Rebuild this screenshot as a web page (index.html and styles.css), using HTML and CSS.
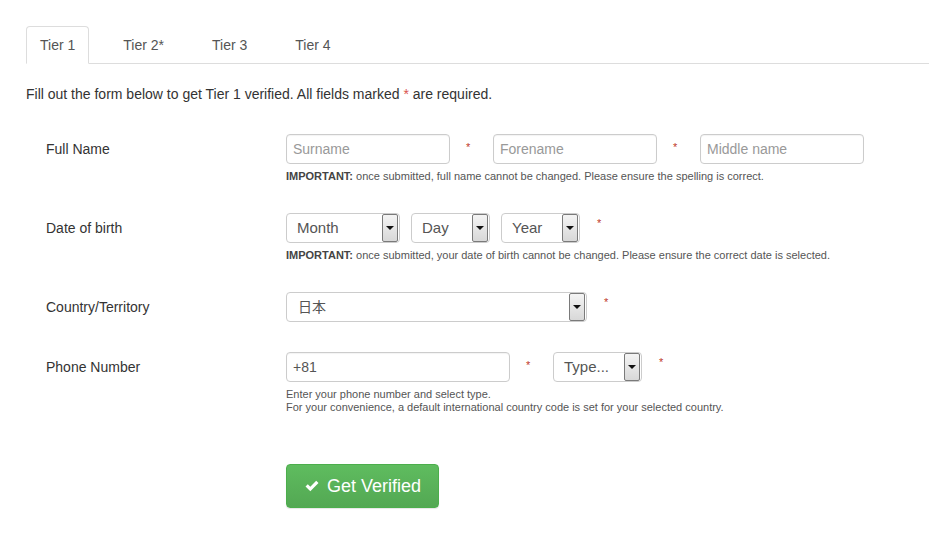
FILE: index.html
```html
<!DOCTYPE html>
<html>
<head>
<meta charset="utf-8">
<link rel="stylesheet" href="styles.css">
</head>
<body>
<div class="page">
  <ul class="tabs">
    <li class="tab active">Tier 1</li>
    <li class="tab">Tier 2*</li>
    <li class="tab">Tier 3</li>
    <li class="tab">Tier 4</li>
  </ul>
  <p class="intro">Fill out the form below to get Tier 1 verified. All fields marked <span class="req">*</span> are required.</p>

  <div class="form">
    <div class="row">
      <div class="label">Full Name</div>
      <div class="fields">
        <div class="controls">
          <div class="input w164 ph">Surname</div>
          <span class="star">*</span>
          <div class="input w164 ph">Forename</div>
          <span class="star">*</span>
          <div class="input w164 ph">Middle name</div>
        </div>
        <div class="help"><b>IMPORTANT:</b> once submitted, full name cannot be changed. Please ensure the spelling is correct.</div>
      </div>
    </div>

    <div class="row">
      <div class="label">Date of birth</div>
      <div class="fields">
        <div class="controls">
          <div class="select w114"><span class="val">Month</span><span class="btn"><span class="tri"></span></span></div>
          <div class="select w79 ml11"><span class="val">Day</span><span class="btn"><span class="tri"></span></span></div>
          <div class="select w79 ml11"><span class="val">Year</span><span class="btn"><span class="tri"></span></span></div>
          <span class="star s2">*</span>
        </div>
        <div class="help"><b>IMPORTANT:</b> once submitted, your date of birth cannot be changed. Please ensure the correct date is selected.</div>
      </div>
    </div>

    <div class="row">
      <div class="label">Country/Territory</div>
      <div class="fields">
        <div class="controls">
          <div class="select w301"><span class="val cjk">日本</span><span class="btn"><span class="tri"></span></span></div>
          <span class="star s2">*</span>
        </div>
      </div>
    </div>

    <div class="row">
      <div class="label">Phone Number</div>
      <div class="fields">
        <div class="controls">
          <div class="input w224">+81</div>
          <span class="star">*</span>
          <div class="select w89"><span class="val">Type...</span><span class="btn"><span class="tri"></span></span></div>
          <span class="star s2">*</span>
        </div>
        <div class="help plain">Enter your phone number and select type.<br>For your convenience, a default international country code is set for your selected country.</div>
      </div>
    </div>

    <div class="row submit">
      <div class="label"></div>
      <div class="fields">
        <button class="verify"><svg class="check" width="16" height="14" viewBox="0 0 16 14"><path d="M1.5 7.5 L3.8 5.2 L6.3 7.7 L12.2 1.8 L14.5 4.1 L6.3 12.3 Z" fill="#fff"/></svg>Get Verified</button>
      </div>
    </div>
  </div>
</div>
</body>
</html>
```
FILE: styles.css
```css
* { box-sizing: border-box; }
html, body { margin: 0; padding: 0; background: #fff; }
body { font-family: "Liberation Sans", Arial, sans-serif; color: #333; font-size: 14px; }
.page { padding: 26px 0 0 26px; }
.tabs {
  list-style: none; margin: 0; padding: 0;
  display: flex; gap: 20px;
  border-bottom: 1px solid #ddd;
  height: 38px;
}
.tab {
  padding: 0 13px; height: 38px; line-height: 37px;
  color: #555; font-size: 14px;
  border: 1px solid transparent; border-radius: 4px 4px 0 0;
}
.tab.active { border-color: #ddd; border-bottom-color: #fff; background: #fff; margin-bottom: -1px; height: 38px; }
.intro { margin: 20px 0 0 0; line-height: 20px; }
.req { color: #d9534f; }
.form { margin-top: 30px; }
.row { display: flex; margin-bottom: 30px; }
.row.submit { padding-top: 20px; }
.label { width: 260px; padding-left: 20px; height: 30px; line-height: 30px; color: #333; }
.controls { display: flex; align-items: flex-start; height: 30px; }
.input {
  height: 30px; border: 1px solid #ccc; border-radius: 4px;
  padding: 0 6px; line-height: 28px; font-size: 14px; color: #555;
  box-shadow: inset 0 1px 1px rgba(0,0,0,0.05);
}
.input.ph { color: #999; }
.w164 { width: 164px; }
.w224 { width: 224px; }
.w114 { width: 114px; }
.w79 { width: 79px; }
.w89 { width: 89px; }
.w301 { width: 301px; }
.ml11 { margin-left: 11px; }
.star { color: #c0392b; font-size: 11px; width: 43px; padding-left: 16px; line-height: 26px; }
.star.s2 { padding-left: 17px; line-height: 21px; }
.select {
  height: 30px; border: 1px solid #ccc; border-radius: 4px;
  display: flex; align-items: stretch; position: relative;
  font-size: 15px; color: #555;
}
.select .val { flex: 1; padding-left: 10px; line-height: 28px; }
.select .val.cjk { font-family: "Liberation Sans", "Noto Sans CJK JP", sans-serif; font-size: 14px; padding-left: 11px; }
.select .btn {
  width: 16px; margin: 0 1px 0 0;
  border: 1px solid #7a7a7a; border-radius: 2px;
  background: linear-gradient(#f4f4f4, #d8d8d8);
  display: flex; align-items: center; justify-content: center;
}
.tri { width: 0; height: 0; border-left: 4px solid transparent; border-right: 4px solid transparent; border-top: 4px solid #111; }
.help { font-size: 11px; line-height: 14px; color: #555; margin-top: 5px; }
.help b { color: #444; }
.help.plain { line-height: 13px; margin-top: 6px; }
.verify {
  width: 153px; height: 44px; margin: 0; padding: 0;
  border: 1px solid #4cae4c; border-radius: 4px;
  background: linear-gradient(#5fbc5f, #53a853);
  color: #fff; font-family: "Liberation Sans", Arial, sans-serif; font-size: 18px;
  display: flex; align-items: center; justify-content: center; gap: 7px;
  box-shadow: 0 1px 1px rgba(0,0,0,0.1);
}
.check { display: block; }
```
